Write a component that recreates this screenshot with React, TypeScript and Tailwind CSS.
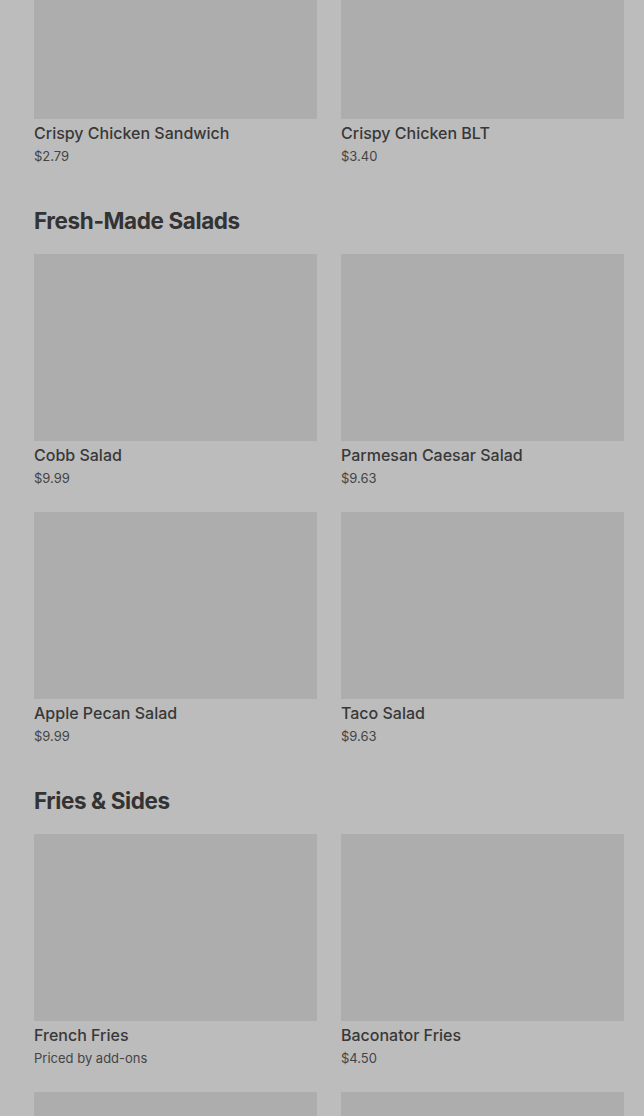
import React from "react";

type Item = { name?: string; price?: string };
type Section = { title?: string; items: Item[] };

const sections: Section[] = [
  {
    items: [
      { name: "Crispy Chicken Sandwich", price: "$2.79" },
      { name: "Crispy Chicken BLT", price: "$3.40" },
    ],
  },
  {
    title: "Fresh-Made Salads",
    items: [
      { name: "Cobb Salad", price: "$9.99" },
      { name: "Parmesan Caesar Salad", price: "$9.63" },
      { name: "Apple Pecan Salad", price: "$9.99" },
      { name: "Taco Salad", price: "$9.63" },
    ],
  },
  {
    title: "Fries & Sides",
    items: [
      { name: "French Fries", price: "Priced by add-ons" },
      { name: "Baconator Fries", price: "$4.50" },
      {},
      {},
    ],
  },
];

const MenuCard: React.FC<{ item: Item }> = ({ item }) => (
  <div className="flex flex-col">
    <div className="h-[187px] bg-[#adadad]" />
    {item.name && (
      <>
        <div className="mt-1 text-[16px] leading-5 font-medium text-[#383838]">
          {item.name}
        </div>
        <div className="mt-1 text-[13px] leading-[18px] text-[#444]">
          {item.price}
        </div>
      </>
    )}
  </div>
);

export default function App() {
  return (
    <div
      className="h-[1116px] bg-[#bcbcbc] overflow-hidden"
      style={{ fontFamily: "Inter, 'Noto Sans', sans-serif" }}
    >
      <div className="-mt-[68px] pl-[34px] pr-5 pb-10 flex flex-col gap-10">
        {sections.map((s, i) => (
          <div key={i} className="flex flex-col">
            {s.title && (
              <h2 className="mb-[17px] text-[22.5px] leading-8 font-bold tracking-[-0.4px] text-[#333]">
                {s.title}
              </h2>
            )}
            <div className="grid grid-cols-2 gap-x-6 gap-y-[25px]">
              {s.items.map((it, j) => (
                <MenuCard key={j} item={it} />
              ))}
            </div>
          </div>
        ))}
      </div>
    </div>
  );
}
